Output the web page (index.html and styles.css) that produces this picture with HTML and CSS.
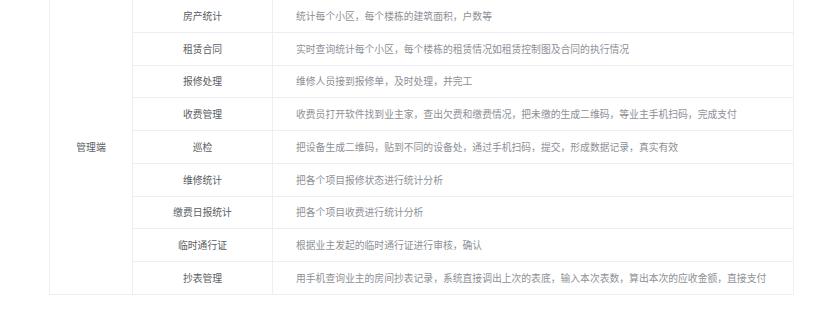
FILE: index.html
```html
<!DOCTYPE html>
<html lang="zh">
<head>
<meta charset="utf-8">
<title>功能表</title>
<link rel="stylesheet" href="styles.css">
</head>
<body>
<div class="table">
  <div class="cell group">管理端</div>
  <div class="cell name">房产统计</div>
  <div class="cell desc">统计每个小区，每个楼栋的建筑面积，户数等</div>
  <div class="cell name">租赁合同</div>
  <div class="cell desc">实时查询统计每个小区，每个楼栋的租赁情况如租赁控制图及合同的执行情况</div>
  <div class="cell name">报修处理</div>
  <div class="cell desc">维修人员接到报修单，及时处理，并完工</div>
  <div class="cell name">收费管理</div>
  <div class="cell desc">收费员打开软件找到业主家，查出欠费和缴费情况，把未缴的生成二维码，等业主手机扫码，完成支付</div>
  <div class="cell name">巡检</div>
  <div class="cell desc">把设备生成二维码，贴到不同的设备处，通过手机扫码，提交，形成数据记录，真实有效</div>
  <div class="cell name">维修统计</div>
  <div class="cell desc">把各个项目报修状态进行统计分析</div>
  <div class="cell name">缴费日报统计</div>
  <div class="cell desc">把各个项目收费进行统计分析</div>
  <div class="cell name">临时通行证</div>
  <div class="cell desc">根据业主发起的临时通行证进行审核，确认</div>
  <div class="cell name">抄表管理</div>
  <div class="cell desc">用手机查询业主的房间抄表记录，系统直接调出上次的表底，输入本次表数，算出本次的应收金额，直接支付</div>
</div>
</body>
</html>
```

FILE: styles.css
```css
html, body {
  margin: 0;
  padding: 0;
  background: #ffffff;
}

body {
  font-family: "Noto Sans CJK SC", "Noto Sans", sans-serif;
  font-size: 9.8px;
}

.table {
  margin-left: 49px;
  width: 745px;
  box-sizing: border-box;
  border-left: 1px solid #ebeef5;
  display: grid;
  grid-template-columns: 83px 140px 521px;
  grid-template-rows: repeat(9, 32.75px);
}

.cell {
  box-sizing: border-box;
  border-right: 1px solid #ebeef5;
  border-bottom: 1px solid #ebeef5;
  display: flex;
  align-items: center;
  line-height: 14px;
  white-space: nowrap;
}

.group {
  grid-column: 1;
  grid-row: 1 / span 9;
  justify-content: center;
  color: #5a5d63;
}

.name {
  grid-column: 2;
  justify-content: center;
  color: #5a5d63;
}

.desc {
  grid-column: 3;
  padding-left: 23px;
  color: #8d9096;
}
```
